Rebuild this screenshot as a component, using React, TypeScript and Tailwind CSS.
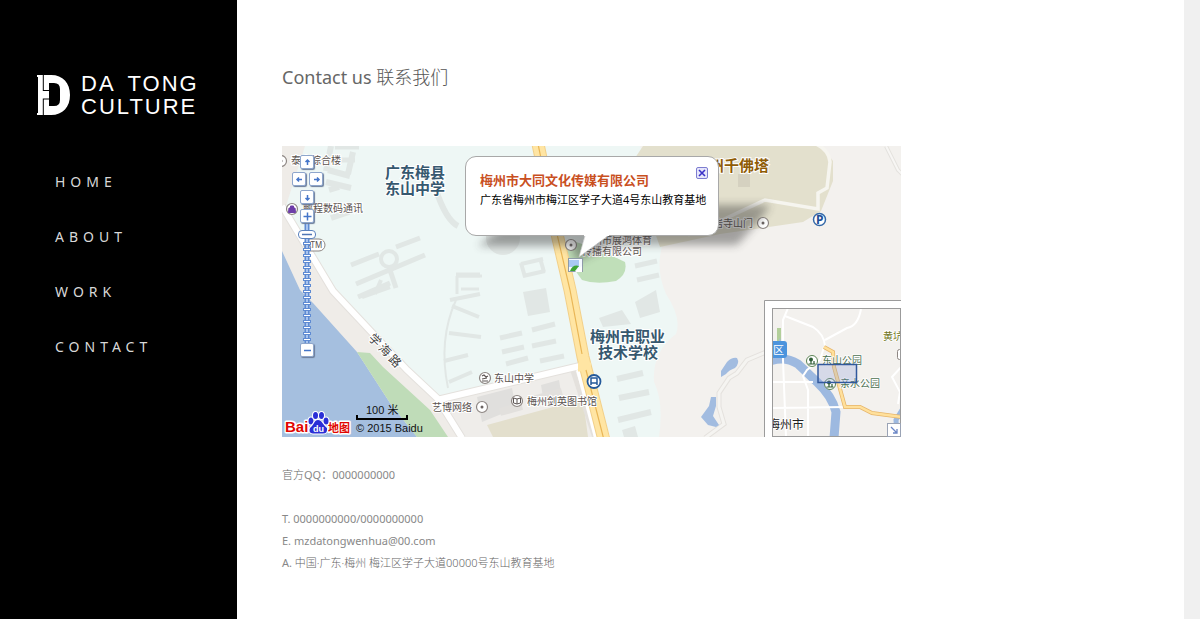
import React from "react";

const navItems = ["HOME", "ABOUT", "WORK", "CONTACT"];

const cjk = "font-['Noto_Sans','Noto_Sans_CJK_SC',sans-serif]";

/* Grey building footprints drawn as thick strokes. */
const buildings: { d: string; w: number }[] = [
  { d: "M331 146l-5 25M353 152l-5 22M328 170l22 6M329 190l10-3M331 218l18-6", w: 6 },
  { d: "M326 182l25 6", w: 6 },
  { d: "M335 147h24M333 160h22", w: 5 },
  { d: "M351 265l28-11M396 247l24-9M356 284l69-29M358 297l32-14M389 267l7 21", w: 5 },
  { d: "M436 190q10 30 22 36", w: 6 },
  { d: "M457 276h25M457 276v18M461 289h18", w: 3 },
  { d: "M381 280l-6 14M362 297l28-10", w: 4 },
  { d: "M450 300l30-6M452 306l27 11M449 333l32 4M444 361l24-6M449 382l23-10", w: 4 },
  { d: "M456 300q-18 40-8 88", w: 2 },
  { d: "M500 338l22-5M502 352l22-5M506 364l22-6M532 330l23-6M532 346l24-5M540 361l24-5", w: 5 },
  { d: "M521 264l22-5M523 276l22-5M521 263l4 14M540 258l4 14", w: 4 },
  { d: "M635 266l22-5M637 280l22-5M456 275h24", w: 5 },
  { d: "M617 379l26-6M619 398l30-6M618 420l33-8", w: 6 },
];

const blocks = [
  "523,292 546,288 550,312 528,316",
  "599,318 622,310 631,324 603,327",
  "635,302 656,290 660,312 640,318",
  "622,430 635,426 638,437 624,437",
  "738,174 750,174 750,187 738,187",
];

function Poi({ x, y, children }: { x: number; y: number; children?: React.ReactNode }) {
  return (
    <g transform={`translate(${x} ${y})`}>
      <circle r="5.5" fill="#fff" stroke="#8d8683" strokeWidth="1.2" />
      {children ?? <circle r="1.5" fill="#6b6462" />}
    </g>
  );
}

function Logo() {
  return (
    <a href="#home" aria-label="DA TONG CULTURE" className="flex items-center gap-[11px] pl-[37px] text-white no-underline">
      <svg width="33" height="40" viewBox="0 0 33 40" aria-hidden="true" className="shrink-0">
        <path d="M0 0H14C26 0 33 8 33 20S26 40 14 40H0V38H1V2H0Z" fill="#fff" />
        <path d="M12 8H17Q23 8 23 14V25Q23 31 17 31H12V24.500H6.800V40H5.800V23.500H12V16H5.800V0H6.800V15H12Z" fill="#000" />
      </svg>
      <span className="flex flex-col whitespace-nowrap font-['Liberation_Sans',Arial,sans-serif] text-[22px] leading-[23px] tracking-[2px]">
        <span className="flex gap-3">
          <span>DA</span>
          <span>TONG</span>
        </span>
        <span>CULTURE</span>
      </span>
    </a>
  );
}

function BaseMap() {
  return (
    <svg viewBox="282 146 619 291" className="block h-auto w-full" role="img" aria-label="地图">
      <defs>
        <filter id="soft" x="-20%" y="-50%" width="140%" height="200%">
          <feGaussianBlur stdDeviation="4" />
        </filter>
        <clipPath id="mini">
          <rect x="773" y="309" width="127" height="127" />
        </clipPath>
      </defs>
      <rect x="282" y="146" width="619" height="291" fill="#f3f1ee" />

      {/* campus ground */}
      <path d="M300 146H640L668 232Q652 262 666 294Q682 318 676 334Q652 352 654 382Q664 402 659 437H440L437 400L330 290L286 206Z" fill="#eef7f5" />
      <path d="M282 146H305L286 206L330 290L440 398L462 437H282Z" fill="#efece8" />
      <path d="M437 401L580 367L588 390L597 437H458Z" fill="#efedea" />
      <path d="M487 425L583 399L588 437H493Z" fill="#e3dfcd" />
      <path d="M477 397l35-9 4 20-34 14ZM541 385l18-5 2 12-18 5Z" fill="#e0dfdd" />
      <path d="M500 412l22-6M532 400l30-8" stroke="#e2e0dd" strokeWidth="8" />

      {buildings.map((b) => (
        <path key={b.d} d={b.d} fill="none" stroke="#e1e7e5" strokeWidth={b.w} />
      ))}
      {blocks.slice(0, 4).map((p) => (
        <polygon key={p} points={p} fill="#e1e7e5" />
      ))}
      <circle cx="389" cy="259" r="8" fill="#eef7f5" stroke="#e1e7e5" strokeWidth="4" />
      <circle cx="503" cy="238" r="17" fill="#e1e7e5" />

      {/* river and bank */}
      <path d="M282 251L300 290L313 303L357 352L390 403L417 437H282Z" fill="#a5bfdf" />
      <path d="M357 352L370 353L383 367L430 410L448 437H417L390 403Z" fill="#bfdcb8" />

      {/* temple grounds */}
      <path d="M643 146H822L833 161V181L821 211L803 222L720 234L660 247L640 190L635 158Z" fill="#e3e0cd" />
      <path d="M816 144q13 6 14 18l-3 26-9 5v16l-53-9-45 21-32 14" fill="none" stroke="#f6f5ef" strokeWidth="3.500" />
      <polygon points={blocks[4]} fill="#d5d1c0" />
      <path d="M886 146l12 24 6 6" fill="none" stroke="#e4e2de" strokeWidth="4" />
      <path d="M886 146l12 24 6 6" fill="none" stroke="#f7f6f4" strokeWidth="2" />

      {/* park */}
      <path d="M570 240L600 250L625 262Q628 274 616 281Q596 285 582 280Q568 262 566 246Z" fill="#c0dfb9" />

      {/* white roads */}
      <g fill="none" stroke="#e4e1dd">
        <path d="M282 206L333 291L407 370L437 398L462 438" strokeWidth="8" />
        <path d="M437 400L580 366" strokeWidth="8" />
        <path d="M572 368L595 438" strokeWidth="5" />
        <path d="M771 350L747 360L737 373L729 378L719 393L719 407L724 424L705 438" strokeWidth="5" />
      </g>
      <g fill="none" stroke="#fff">
        <path d="M282 206L333 291L407 370L437 398L462 438" strokeWidth="6" />
        <path d="M437 400L580 366" strokeWidth="6" />
        <path d="M578 370L596 438" strokeWidth="4" />
        <path d="M588 372L609 438" strokeWidth="3" />
      </g>
      <path d="M771 350L747 360L737 373L729 378L719 393L719 407L724 424L705 438" fill="none" stroke="#f5f4f1" strokeWidth="3" />

      {/* main road */}
      <g fill="none">
        <path d="M538 144L557 234L570 290L583 357L604 440" stroke="#f2d08a" strokeWidth="13" />
        <path d="M538 144L557 234L570 290L583 357L604 440" stroke="#ffe5a3" strokeWidth="11" />
        <path d="M578 367H591" stroke="#ffe5a3" strokeWidth="9" />
        <path d="M538 144L557 234L570 290L582 354M586 370L604 440" stroke="#e9b656" strokeWidth="1.200" />
      </g>

      {/* ponds */}
      <g fill="#a2bce0">
        <path d="M721 371L727 362Q732 357 737 358Q740 363 735 368Q729 370 726 374L721 377Z" />
        <path d="M711 397H716V406L713 416L719 425L716 427L708 425L701 417L709 406Z" />
      </g>

      {/* points of interest */}
      <g>
        <Poi x={281} y={161} />
        <Poi x={292} y={209}>
          <path d="M-3-1H3L3.500 3.500H-3.500ZM-1.500-1V-3H1.500V-1" fill="#6d3da8" stroke="#6d3da8" />
        </Poi>
        <rect x="304" y="239" width="21" height="12" rx="6" fill="#fff" stroke="#8d8683" />
        <Poi x={571} y={245} />
        <Poi x={763} y={223} />
        <Poi x={482} y={407} />
        <Poi x={485} y={378}>
          <path d="M-3-2L-1-3 1-1 3-2M-3 3H3M-3 1L2 0" fill="none" stroke="#5d5654" strokeWidth="1.200" />
        </Poi>
        <Poi x={517} y={401}>
          <path d="M0-2L-3.500-3V2L0 3L3.500 2V-3ZV3" fill="none" stroke="#5d5654" />
        </Poi>
        <circle cx="819.500" cy="219.500" r="6" fill="#fff" stroke="#3469a8" strokeWidth="1.500" />
        <circle cx="594" cy="381.500" r="6.500" fill="#fff" stroke="#24599a" strokeWidth="1.800" />
        <path d="M591 378h6v5h-6ZM591 383v2M597 383v2M591 383h6" fill="none" stroke="#24599a" strokeWidth="1.500" />
      </g>

      <g className={cjk}>
        <text x="816" y="224" fontSize="12" fontWeight="700" fill="#1e4f96">P</text>
        <g fontSize="10" fill="#5b5350" stroke="#fff" strokeWidth="2" paintOrder="stroke">
          <text x="291" y="164">泰丰综合楼</text>
          <text x="303" y="212">鹏程数码通讯</text>
          <text x="306" y="248" fontSize="8">ATM</text>
          <text x="592" y="244">州市展鸿体育</text>
          <text x="582" y="255">传播有限公司</text>
          <text x="703" y="227">岩岩寺山门</text>
          <text x="494" y="382">东山中学</text>
          <text x="432" y="411">艺博网络</text>
          <text x="527" y="405">梅州剑英图书馆</text>
        </g>
        <g fontSize="12" fill="#444" stroke="#fff" strokeWidth="2" paintOrder="stroke" textAnchor="middle">
          <text transform="translate(372 343) rotate(45)">学</text>
          <text transform="translate(382 353) rotate(45)">海</text>
          <text transform="translate(392 364) rotate(45)">路</text>
        </g>
        <g fontSize="15" fontWeight="700" fill="#36586f" stroke="#fff" strokeWidth="2" paintOrder="stroke">
          <text x="385" y="178">广东梅县</text>
          <text x="385" y="194">东山中学</text>
          <text x="590" y="342">梅州市职业</text>
          <text x="598" y="358">技术学校</text>
        </g>
        <text x="709" y="171" fontSize="15" fontWeight="700" fill="#8f5c06" stroke="#fff" strokeWidth="2" paintOrder="stroke">州千佛塔</text>
      </g>

      {/* overview map */}
      <path d="M764.500 438V300.500H902V438Z" fill="#fff" stroke="#9b9b9b" />
      <g clipPath="url(#mini)">
        <rect x="773" y="309" width="127" height="127" fill="#f3f1ee" />
        <path d="M779 328v14" stroke="#b2cf9a" strokeWidth="4" />
        <path d="M776 348L780 338L783 348" fill="#a2bce0" />
        <path d="M770 361Q785 356 798 364L817 382Q832 396 836 412L834 438" fill="none" stroke="#9db9e0" strokeWidth="9" />
        <path d="M897 438L896 420L902 410" fill="none" stroke="#9db9e0" strokeWidth="5" />
        <g fill="none" stroke="#fff" strokeWidth="2">
          <path d="M788 308L783 320V360L786 437M773 382H813M773 408L845 407M785 316L813 327Q824 334 825 346M825 340L847 328Q858 326 861 309M824 347L820 360L807 370L803 376L808 390V437M902 366L892 377L900 392L898 404" />
        </g>
        <path d="M824 347L833 352L834 367L845 407L860 407L872 413L902 417" fill="none" stroke="#e6b56a" strokeWidth="4" />
        <path d="M824 347L833 352L834 367L845 407L860 407L872 413L902 417" fill="none" stroke="#ffe09b" strokeWidth="2.500" />
        <rect x="765" y="341" width="22" height="17" rx="3" fill="#4b94dd" />
        {[[812, 361], [830, 384]].map(([x, y]) => (
          <g key={x} transform={`translate(${x} ${y})`}>
            <circle r="5.500" fill="#fff" stroke="#5b8354" />
            <circle cx="-1" cy="-1.500" r="2" fill="#2f5d35" />
            <path d="M-3.500 3H3.500M-1 0V3M2 0V3" stroke="#2f5d35" fill="none" strokeWidth="1.200" />
          </g>
        ))}
        <rect x="897.500" y="349.500" width="8" height="10" rx="2" fill="#fff" stroke="#8d8683" />
        <g className={cjk} stroke="#fff" strokeWidth="1.500" paintOrder="stroke" fill="#4c7050" fontSize="10">
          <text x="822" y="364">东山公园</text>
          <text x="840" y="387">亲水公园</text>
          <text x="883" y="340" fill="#6f7420">黄坑</text>
          <text x="773" y="354" fill="#fff" stroke="none" fontSize="11">区</text>
          <text x="768" y="429" fill="#222" fontSize="12">梅州市</text>
        </g>
        <rect x="818" y="364.500" width="38.500" height="18" fill="#7f95d6" fillOpacity=".25" stroke="#31589c" strokeWidth="1.500" />
      </g>
      <rect x="772.500" y="308.500" width="128" height="128" fill="none" stroke="#9b9b9b" />

      {/* scale bar */}
      <path d="M357 415v4h50v-4" fill="none" stroke="#000" strokeWidth="2" />
      <g fontSize="11" fill="#111" className="font-['Liberation_Sans','Noto_Sans_CJK_SC',sans-serif]">
        <text x="366" y="414">100 米</text>
        <text x="356" y="432">© 2015 Baidu</text>
      </g>

      {/* map provider mark */}
      <g className="font-['Liberation_Sans','Noto_Sans_CJK_SC',sans-serif]" fontWeight="700" stroke="#fff" strokeWidth="3" paintOrder="stroke" strokeLinejoin="round">
        <text x="285" y="432" fontSize="15" fill="#e10601">Bai</text>
        <text x="328" y="432" fontSize="11" fill="#e10601">地图</text>
        <g fill="#2a2fd6" stroke="#fff" strokeWidth="2" paintOrder="stroke">
          <ellipse cx="311" cy="421" rx="2.500" ry="3.500" />
          <ellipse cx="315.500" cy="415.500" rx="2.500" ry="3.500" />
          <ellipse cx="321.500" cy="415.500" rx="2.500" ry="3.500" />
          <ellipse cx="326" cy="421" rx="2.500" ry="3.500" />
          <path d="M318 420C322 420 323 425 327 428Q328 434 322 433.500H313Q308 433 310 428C314 425 314 420 318 420Z" />
        </g>
        <text x="313" y="432" fontSize="9" fill="#fff" stroke="none">du</text>
      </g>

      {/* callout shadow */}
      <path d="M478 246L530 205H770Q765 215 737 245H612L576 262L572 246Z" fill="#333" opacity=".42" filter="url(#soft)" />
    </svg>
  );
}

const panButtons = [
  { label: "向上平移", pos: "left-[18px] top-[9px]", d: "M6.500 9V4M4.500 6L6.500 4L8.500 6" },
  { label: "向左平移", pos: "left-[10px] top-[26px]", d: "M9 6.500H4M6 4.500L4 6.500L6 8.500" },
  { label: "向右平移", pos: "left-[27px] top-[26px]", d: "M4 6.500H9M7 4.500L9 6.500L7 8.500" },
  { label: "向下平移", pos: "left-[18px] top-[44px]", d: "M6.500 4V9M4.500 7L6.500 9L8.500 7" },
  { label: "放大一级", pos: "left-[18px] top-[63px]", d: "M6.500 2.500V10.500M2.500 6.500H10.500" },
  { label: "缩小一级", pos: "left-[18px] top-[197px]", d: "M3 6.500H10" },
];

function MapControls() {
  const rungs = Array.from({ length: 17 }, (_, i) => 14 + i * 6);
  return (
    <>
      <svg width="18" height="124" viewBox="0 0 18 124" className="absolute left-4 top-[75px]" aria-hidden="true">
        <path d="M9 0V124" stroke="#5f8bd3" strokeWidth="5" />
        <path d="M9 0V124" stroke="#a9c4ee" strokeWidth="2" />
        {rungs.map((y) => (
          <g key={y}>
            <rect x="5" y={y + 7} width="8" height="3" fill="#5f8bd3" />
            <rect x="6" y={y + 8} width="6" height="1" fill="#fff" />
          </g>
        ))}
        <rect x=".500" y="9.500" width="17" height="8" rx="3.500" fill="#fff" stroke="#5b82bd" />
        <path d="M4 13.500h10" stroke="#4f76b5" strokeWidth="1.500" />
      </svg>
      <input
        type="range"
        aria-label="缩放级别"
        min={3}
        max={19}
        defaultValue={17}
        className="absolute left-4 top-[80px] m-0 h-[112px] w-[17px] cursor-pointer opacity-0 [writing-mode:vertical-lr]"
      />
      {panButtons.map((b) => (
        <button
          key={b.label}
          type="button"
          aria-label={b.label}
          className={`absolute flex size-[14px] cursor-pointer items-center justify-center rounded-[2px] border border-[#8ea6cc] bg-white shadow-[1px_1px_1px_#6b7c99] ${b.pos}`}
        >
          <svg width="13" height="13" viewBox="0 0 13 13" className="shrink-0" aria-hidden="true">
            <path d={b.d} fill="none" stroke="#4475c9" strokeWidth="1.500" />
          </svg>
        </button>
      ))}
      <button
        type="button"
        aria-label="收起鹰眼"
        className="absolute bottom-0 right-0 flex size-[14px] cursor-pointer items-center justify-center border border-[#9aa3b5] bg-white"
      >
        <svg width="10" height="10" viewBox="0 0 10 10" aria-hidden="true">
          <path d="M2 2L7.500 7.500M8 4V8H4" fill="none" stroke="#6b86c6" strokeWidth="1.300" />
        </svg>
      </button>
    </>
  );
}

function Callout() {
  return (
    <>
      <section
        className={`absolute left-[183px] top-[10px] h-20 w-[254px] whitespace-nowrap rounded-[11px] border border-[#a8a8a8] bg-white pl-[14px] pt-[13px] ${cjk}`}
      >
        <h2 className="text-[13px] font-bold leading-5 text-[#c9501f]">梅州市大同文化传媒有限公司</h2>
        <p className="text-[11px] leading-5 text-black">广东省梅州市梅江区学子大道4号东山教育基地</p>
        <button
          type="button"
          aria-label="关闭"
          className="absolute right-[10px] top-[10px] flex size-3 cursor-pointer items-center justify-center rounded-[2px] border border-[#7d7dd0] bg-[#e6e6fb]"
        >
          <svg width="8" height="8" viewBox="0 0 8 8" aria-hidden="true">
            <path d="M1 1L7 7M7 1L1 7" stroke="#3a32c8" strokeWidth="1.600" />
          </svg>
        </button>
      </section>
      <svg width="42" height="40" viewBox="0 0 42 40" className="absolute left-[285px] top-[88px]" aria-hidden="true">
        <rect x="1.500" y="24.500" width="14" height="13" fill="#f4f9ff" stroke="#8e9aa8" />
        <path d="M2 26h10v7H2Z" fill="#a9c9f3" />
        <path d="M3 37Q6 30 12 32L8 37Z" fill="#3fa535" />
        <path d="M15 38V32L8 38Z" fill="#fff" />
        <path d="M18 1L12 23L42 1Z" fill="#fff" />
        <path d="M18 2L12 23L41 2" fill="none" stroke="#c4c4c4" strokeWidth=".600" />
        <path d="M17 0H42V2H17Z" fill="#fff" />
      </svg>
    </>
  );
}

export default function App() {
  return (
    <div className={`flex min-h-screen bg-white ${cjk}`}>
      <aside className="w-[237px] shrink-0 bg-black pt-[72px]">
        <Logo />
        <nav className="mt-9 pl-[55px]">
          <ul>
            {navItems.map((item) => (
              <li key={item}>
                <a href={`#${item.toLowerCase()}`} className="block text-sm leading-[55px] tracking-[5px] text-[#d8d8d8]">
                  {item}
                </a>
              </li>
            ))}
          </ul>
        </nav>
      </aside>

      <main className="min-w-0 flex-1 px-[45px] pb-11 pt-[63px]">
        <h1 className="text-lg leading-7 text-[#666]">
          Contact us <span className="font-light text-[#555]">联系我们</span>
        </h1>
        <div className="relative mt-[55px] w-full max-w-[619px] overflow-hidden">
          <BaseMap />
          <MapControls />
          <Callout />
        </div>
        <address className="mt-[27px] text-[11px] not-italic leading-[22px] text-[#888]">
          <p>
            <span className="font-light text-[#666]">官方</span>QQ：0000000000
          </p>
          <p className="mt-[22px]">T. 0000000000/0000000000</p>
          <p>
            E. <a href="mailto:mzdatongwenhua@00.com">mzdatongwenhua@00.com</a>
          </p>
          <p>
            A. <span className="font-light text-[#666]">中国·广东·梅州 梅江区学子大道00000号东山教育基地</span>
          </p>
        </address>
      </main>

      <div className="w-4 shrink-0 bg-[#f0f0f0]" />
    </div>
  );
}
